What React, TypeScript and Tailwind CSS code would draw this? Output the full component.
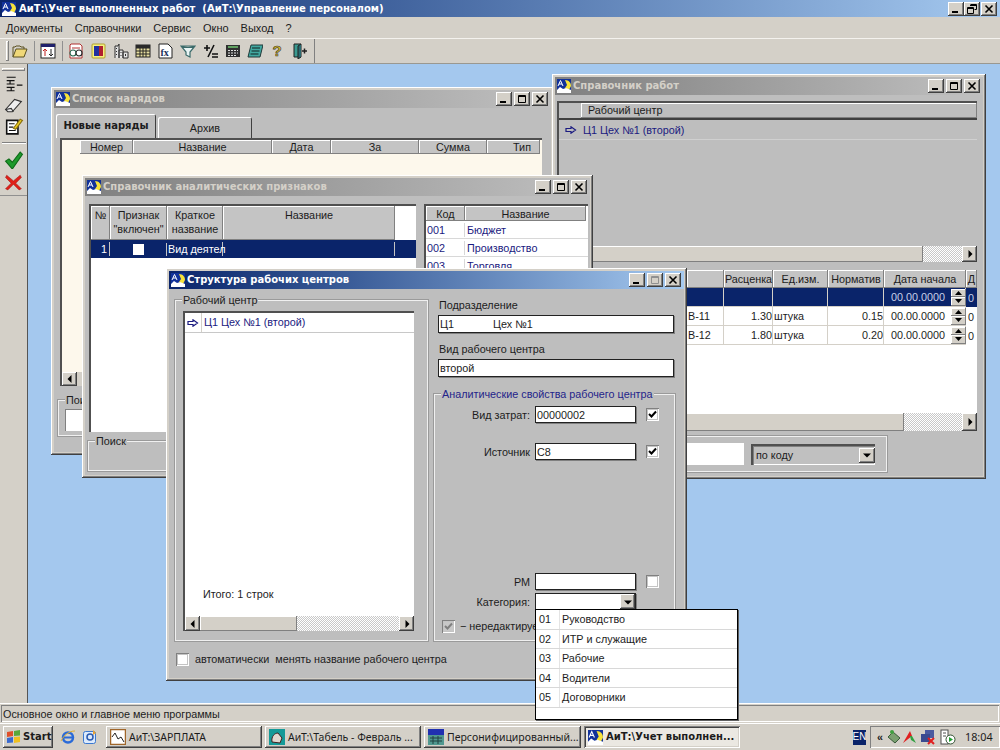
import type { ReactNode } from "react";

const raised =
  "shadow-[inset_-1px_-1px_0_#404040,inset_1px_1px_0_#fff,inset_-2px_-2px_0_#808080,inset_2px_2px_0_#d4d0c8]";
const sunken =
  "shadow-[inset_1px_1px_0_#808080,inset_-1px_-1px_0_#fff,inset_2px_2px_0_#404040,inset_-2px_-2px_0_#d4d0c8]";
const thinRaised = "shadow-[inset_-1px_-1px_0_#808080,inset_1px_1px_0_#fff]";
const thinSunken = "shadow-[inset_1px_1px_0_#808080,inset_-1px_-1px_0_#fff]";
const dither = "bg-[repeating-conic-gradient(#fff_0_25%,#c8c8c8_0_50%)] bg-[length:2px_2px]";
const titleFont = "font-['DejaVu_Sans'] font-bold text-[10px]";

function AppIcon({ size = 14 }: { size?: number }) {
  return (
    <svg width={size} height={size} viewBox="0 0 14 14" className="shrink-0">
      <rect width="14" height="14" fill="#12329a" />
      <path d="M1 7 3.500 1.500 6 7M2 5h3" stroke="#fff" strokeWidth="1" fill="none" />
      <path d="M8 1c4 0 6 3 6 6l-2 4-4-2 2-3z" fill="#f6e23a" />
      <path d="M0 14V11l3-3 3 2 3-1 5 2v3z" fill="#fff" />
    </svg>
  );
}

function WinButton({ kind, disabled }: { kind: "min" | "max" | "close" | "restore"; disabled?: boolean }) {
  const c = disabled ? "#909090" : "#000";
  return (
    <div className={`flex h-[14px] w-[16px] items-center justify-center bg-[#d4d0c8] ${raised}`}>
      <svg width="10" height="10" viewBox="0 0 10 10">
        {kind === "min" && <rect x="1" y="7" width="6" height="2" fill={c} />}
        {kind === "max" && <path d="M1.500 1.500h7v7h-7zM1 2.500h8" stroke={c} fill="none" />}
        {kind === "restore" && <path d="M3.500 .5h6v5h-2M.5 3.500h6v6h-6zM.5 4.500h6M3 1.500h6" stroke={c} fill="none" />}
        {kind === "close" && <path d="M1.500 1.500l7 7M8.500 1.500l-7 7" stroke={c} strokeWidth="1.600" />}
      </svg>
    </div>
  );
}

function Arrow({ dir, size = 15 }: { dir: "left" | "right" | "down"; size?: number }) {
  return (
    <div className={`flex h-full shrink-0 items-center justify-center bg-[#d4d0c8] ${raised}`} style={{ width: size }}>
      <svg width="8" height="8" viewBox="0 0 8 8">
        {dir === "left" && <path d="M5.500 0v8L1.500 4z" fill="#000" />}
        {dir === "right" && <path d="M2.500 0v8l4-4z" fill="#000" />}
        {dir === "down" && <path d="M0 2.500h8l-4 4z" fill="#000" />}
      </svg>
    </div>
  );
}

function Window({
  className,
  title,
  active,
  maxDisabled,
  children,
}: {
  className: string;
  title: string;
  active?: boolean;
  maxDisabled?: boolean;
  children: ReactNode;
}) {
  return (
    <div className={`absolute flex flex-col bg-[#d4d0c8] p-[3px] ${raised} ${className}`}>
      <div
        className={`flex h-[18px] shrink-0 items-center gap-[2px] pl-[2px] pr-[3px] ${
          active ? "bg-gradient-to-r from-[#0a246a] to-[#a6caf0]" : "bg-gradient-to-r from-[#808080] to-[#c0c0c0]"
        }`}
      >
        <AppIcon />
        <span className={`${titleFont} flex-1 truncate ${active ? "text-white" : "text-[#d4d0c8]"}`}>{title}</span>
        <WinButton kind="min" />
        <WinButton kind="max" disabled={maxDisabled} />
        <WinButton kind="close" />
      </div>
      <div className="relative flex min-h-0 flex-1 flex-col bg-[#bebebe]">{children}</div>
    </div>
  );
}

function Head({ className, children }: { className: string; children?: ReactNode }) {
  return (
    <div className={`flex shrink-0 items-center justify-center bg-[#c4c4c4] ${thinRaised} ${className}`}>{children}</div>
  );
}

function Group({
  className,
  label,
  blue,
  children,
}: {
  className: string;
  label: string;
  blue?: boolean;
  children?: ReactNode;
}) {
  return (
    <div className={`relative border border-[#f0f0f0] shadow-[0_0_0_1px_#9a9a9a] ${className}`}>
      {label && (
        <span className={`absolute left-[6px] top-[-8px] bg-[#bebebe] px-[1px] ${blue ? "text-[#24248a]" : ""}`}>{label}</span>
      )}
      {children}
    </div>
  );
}

function Check({ checked, disabled, className = "" }: { checked?: boolean; disabled?: boolean; className?: string }) {
  return (
    <div
      className={`flex h-[13px] w-[13px] shrink-0 items-center justify-center ${
        disabled ? "bg-[#c8c8c8]" : "bg-white"
      } ${thinSunken} outline outline-1 -outline-offset-2 outline-[#c4c4c4] ${className}`}
    >
      {checked && (
        <svg width="9" height="9" viewBox="0 0 9 9">
          <path d="M1 4l2.500 2.500L8 1.500" stroke={disabled ? "#808080" : "#000"} strokeWidth="2" fill="none" />
        </svg>
      )}
    </div>
  );
}

function Field({ className, children }: { className: string; children?: ReactNode }) {
  return (
    <div className={`flex items-center border border-[#222] bg-white pl-[1px] shadow-[1px_1px_0_#808080] ${className}`}>
      {children}
    </div>
  );
}

function RowArrow({ color }: { color: string }) {
  return (
    <svg width="12" height="8" viewBox="0 0 12 8">
      <path d="M1 2.500h5V.8L10.500 4 6 7.200V5.500H1z" fill="none" stroke={color} strokeWidth="1.200" />
    </svg>
  );
}

function Spin() {
  return (
    <div className="flex h-[17px] w-[15px] shrink-0 flex-col">
      {[0, 1].map((i) => (
        <div key={i} className={`flex h-[8.5px] items-center justify-center bg-[#d4d0c8] ${thinRaised}`}>
          <svg width="7" height="4" viewBox="0 0 7 4">
            <path d={i === 0 ? "M0 4h7L3.500 0z" : "M0 0h7L3.500 4z"} fill="#000" />
          </svg>
        </div>
      ))}
    </div>
  );
}

const toolIcons: ReactNode[] = [
  <>
    <path d="M1 14V4h2l1-1h4l1 1h3v2" fill="none" stroke="#5a5020" />
    <path d="M1 14l3-8h11l-3 8z" fill="#f0d878" stroke="#5a5020" />
  </>,
  <>
    <rect x="1" y="1" width="14" height="14" fill="#fff" stroke="#222" />
    <rect x="1" y="1" width="14" height="3" fill="#20206a" />
    <path d="M5 13V6M3 8l2-2 2 2" stroke="#c02020" fill="none" />
    <path d="M11 6v7M9 11l2 2 2-2" stroke="#222" fill="none" />
  </>,
  <>
    <path d="M3 1h9l2 2v12H2V2z" fill="#fff" stroke="#b03030" />
    <circle cx="5" cy="10" r="3" fill="#fff" stroke="#2a6a50" strokeWidth="1.200" />
    <circle cx="11" cy="10" r="3" fill="#fff" stroke="#2a2a2a" strokeWidth="1.200" />
    <path d="M4 5h8" stroke="#b03030" />
  </>,
  <>
    <rect x="1" y="1" width="13" height="14" rx="1" fill="#f6f080" stroke="#b0a030" />
    <rect x="3" y="3" width="5" height="10" fill="#2030a0" />
    <rect x="8" y="3" width="4" height="10" fill="#b02030" />
  </>,
  <>
    <path d="M2 15V3h3l1-2v14M6 15V7h4v8M10 15V9h5v6z" fill="#e4e4e4" stroke="#303030" />
    <path d="M3.500 5v1M3.500 8v1M3.500 11v1M8 9v1M8 12v1M12.500 11v2" stroke="#303030" />
  </>,
  <>
    <rect x="1" y="2" width="14" height="12" fill="#e8e0a0" stroke="#222" />
    <path d="M1 5h14M1 8h14M1 11h14M5 2v12M8 2v12M11 2v12" stroke="#222" />
    <rect x="1" y="2" width="14" height="3" fill="#2a2a2a" />
  </>,
  <>
    <path d="M1 1h9l4 4v10H1z" fill="#fff" stroke="#222" />
    <text x="2.500" y="13" fontSize="10" fontFamily="'Liberation Serif', serif" fontWeight="700" fill="#20305a">
      fx
    </text>
  </>,
  <path d="M1 3h14L10 9v5l-4-2V9z M1 3c2 2 12 2 14 0" fill="#e8f4f4" stroke="#3a6a6a" strokeWidth="1.200" />,
  <path d="M1 5h6M4 2v6M11 2L5 14M9 11h6M9 14h6" stroke="#111" strokeWidth="1.600" fill="none" />,
  <>
    <rect x="1" y="2" width="14" height="12" fill="#303030" />
    <path d="M3 4h10" stroke="#60a060" strokeWidth="2" />
    <path d="M3 7.500h2M6 7.500h2M9 7.500h2M12 7.500h1M3 10h2M6 10h2M9 10h2M12 10h1M3 12.500h2M6 12.500h2M9 12.500h2" stroke="#e0e0e0" />
  </>,
  <>
    <path d="M4 2h12l-3 12H1z" fill="#40a8a0" stroke="#203838" />
    <path d="M5 5h8M4.500 8h8M3.500 11h8" stroke="#102020" />
  </>,
  <>
    <text x="2.500" y="13" fontSize="15" fontFamily="'Liberation Sans', sans-serif" fontWeight="700" fill="#e0c020" stroke="#333" strokeWidth=".6">
      ?
    </text>
  </>,
  <>
    <path d="M2 1h7v13H2z" fill="#3a9a90" stroke="#202020" />
    <path d="M9 1l-3 2v13l3-2" fill="#2a6a70" stroke="#202020" />
    <path d="M10 8h5M12.500 5.500v5" stroke="#202020" strokeWidth="1.500" />
  </>,
];

function LeftIcon({ i }: { i: number }) {
  const icons = [
    <path key="a" d="M2 2h8M2 5h7M5 5v3M2 8h7M11 9h5M2 11h7M6 11v3M2 14h7" stroke="#111" fill="none" />,
    <g key="b">
      <path d="M1 12l8-9 6 2-8 9H3z" fill="#eee" stroke="#333" />
      <path d="M1 12l5-1 2 3" stroke="#333" fill="none" />
    </g>,
    <g key="c">
      <path d="M2 3h10v12H2z" fill="#fff" stroke="#111" strokeWidth="1.400" />
      <path d="M4 6h5M4 9h4M4 12h6" stroke="#111" />
      <path d="M8 10l6-8 2 1-6 8z" fill="#f0d020" stroke="#8a7010" />
    </g>,
    <path key="d" d="M1 9l3-2 3 3 7-9 2 2-9 13z" fill="#1e9a2c" stroke="#0e6a18" />,
    <path key="e" d="M2 2l6 5 6-5 1 2-5 5 5 5-2 1-5-5-5 5-2-1 5-5-5-5z" fill="#e02018" stroke="#a01010" strokeWidth=".5" />,
  ];
  return (
    <svg width="20" height="18" viewBox="0 0 17 16">
      {icons[i]}
    </svg>
  );
}

function TaskButton({ width, active, icon, children }: { width: string; active?: boolean; icon: ReactNode; children: ReactNode }) {
  return (
    <div
      className={`flex h-[22px] shrink-0 items-center gap-[3px] overflow-hidden whitespace-nowrap pl-[4px] ${width} ${
        active ? `bg-[#ebe8e2] font-['DejaVu_Sans'] text-[10px] font-bold ${sunken}` : `bg-[#d4d0c8] font-['Noto_Sans'] text-[10.5px] ${raised}`
      }`}
    >
      {icon}
      <span>{children}</span>
    </div>
  );
}

export default function App() {
  return (
    <div className="relative flex h-[750px] w-[1000px] flex-col overflow-hidden bg-[#d4d0c8] font-['Liberation_Sans',sans-serif] text-[10.8px] leading-[14px] text-[#1c1c1c]">
      {/* main title */}
      <div className="flex h-[17px] shrink-0 items-center bg-gradient-to-r from-[#0a246a] to-[#a6caf0] pl-[2px] pr-[3px]">
        <AppIcon />
        <span className={`${titleFont} ml-[3px] flex-1 text-white`}>АиТ:\Учет выполненных работ&nbsp; (АиТ:\Управление персоналом)</span>
        <WinButton kind="min" />
        <WinButton kind="restore" />
        <div className="w-[1px]" />
        <WinButton kind="close" />
      </div>

      {/* menu */}
      <div className="flex h-[21px] shrink-0 items-center gap-[12px] pl-[6px] text-[11px]">
        {["Документы", "Справочники", "Сервис", "Окно", "Выход", "?"].map((m) => (
          <span key={m}>{m}</span>
        ))}
      </div>

      {/* toolbar */}
      <div className="flex h-[26px] shrink-0 items-center border-t border-t-[#f4f2ee] border-b border-b-[#9a9890]">
        <div className={`ml-[6px] h-[20px] w-[3px] ${thinRaised}`} />
        <div className="flex h-full w-[306px] items-center border-r border-r-[#808080]">
          {toolIcons.map((icon, i) => (
            <div key={i} className="flex items-center">
              <div className="flex w-[22.4px] justify-center">
                <svg width="16" height="16" viewBox="0 0 16 16">
                  {icon}
                </svg>
              </div>
              {(i === 0 || i === 1) && <div className="mx-[2.3px] h-[20px] w-[1px] bg-[#909090]" />}
            </div>
          ))}
        </div>
      </div>

      {/* mdi area */}
      <div className="relative flex min-h-0 flex-1">
        <div className="w-[28px] shrink-0 border-r border-r-[#555]">
          <div className="flex h-[132px] flex-col items-center border-b border-b-[#909090]">
            <div className={`mt-[4px] h-[3px] w-[23px] ${thinRaised}`} />
            <div className="mt-[4px] flex flex-col items-center gap-[3px]">
              <LeftIcon i={0} />
              <LeftIcon i={1} />
              <LeftIcon i={2} />
            </div>
            <div className="mb-[7px] mt-[7px] h-[2px] w-[24px] border-t border-t-[#808080] border-b border-b-white" />
            <LeftIcon i={3} />
            <div className="mt-[4px]">
              <LeftIcon i={4} />
            </div>
          </div>
        </div>
        <div className="flex-1 bg-[#a4c8ee]" />

        {/* Список нарядов */}
        <Window className="left-[51px] top-[23px] h-[368px] w-[503px]" title="Список нарядов">
          <div className="flex h-[30px] shrink-0 items-end pl-[2px]">
            <div className={`flex h-[24px] w-[100px] items-center justify-center ${titleFont} rounded-t-[2px] bg-[#bebebe] shadow-[inset_1px_1px_0_#fff,inset_-1px_0_0_#404040]`}>
              Новые наряды
            </div>
            <div className="ml-[2px] flex h-[21px] w-[94px] items-center justify-center rounded-t-[2px] bg-[#bebebe] shadow-[inset_1px_1px_0_#fff,inset_-1px_0_0_#404040]">
              Архив
            </div>
          </div>
          <div className="ml-[6px] flex h-[248px] w-[482px] flex-col border-l-2 border-t-2 border-l-[#505050] border-t-[#505050] bg-[#fdf8ec]">
            <div className="flex h-[14px] shrink-0 pl-[18px]">
              <Head className="w-[53px]">Номер</Head>
              <Head className="w-[139px]">Название</Head>
              <Head className="w-[59px]">Дата</Head>
              <Head className="w-[88px]">За</Head>
              <Head className="w-[68px]">Сумма</Head>
              <Head className="w-[53px] pl-[17px]">Тип</Head>
            </div>
            <div className="flex-1" />
            <div className="flex h-[14px] bg-[#d4d0c8]">
              <Arrow dir="left" />
            </div>
          </div>
          <Group className="ml-[4px] mt-[14px] h-[36px] w-[300px]" label="Поиск">
            <div className={`ml-[6px] mt-[8px] h-[22px] w-[120px] bg-white ${thinSunken}`} />
          </Group>
        </Window>

        {/* Справочник работ */}
        <Window className="left-[552px] top-[10px] h-[405px] w-[434px]" title="Справочник работ">
          <div className="ml-[2px] mr-[6px] mt-[6px] flex h-[161px] flex-col border-l-2 border-t-2 border-l-[#505050] border-t-[#505050]">
            <div className="flex h-[17px] shrink-0 border-b-2 border-b-[#404040] pl-[22px]">
              <div className={`flex-1 pl-[7px] leading-[15px] ${thinRaised}`}>Рабочий центр</div>
            </div>
            <div className="flex h-[20px] shrink-0 items-center border-b border-b-[#d0d0d0] pl-[6px] text-[#1a1a80]">
              <RowArrow color="#1a1a80" />
              <span className="ml-[6px]">Ц1 Цех №1 (второй)</span>
            </div>
            <div className="flex-1" />
            <div className="flex h-[16px] shrink-0">
              <div className={`flex-1 bg-[#d4d0c8] ${thinRaised}`} />
              <div className={`w-[39px] ${dither}`} />
              <Arrow dir="right" />
            </div>
          </div>
          <div className="ml-[2px] mr-[6px] mt-[8px] flex h-[161px] flex-col bg-white">
            <div className="flex h-[18px] shrink-0 pl-[130px]">
              <Head className="w-[37px]" />
              <Head className="w-[49px]">Расценка</Head>
              <Head className="w-[55px]">Ед.изм.</Head>
              <Head className="w-[56px]">Норматив</Head>
              <Head className="w-[82px]">Дата начала</Head>
              <Head className="flex-1">Д</Head>
            </div>
            {[
              ["", "", "", "", true],
              ["В-11", "1.30", "штука", "0.15", false],
              ["В-12", "1.80", "штука", "0.20", false],
            ].map(([code, price, unit, norm, sel], i) => (
              <div
                key={i}
                className={`flex h-[19px] shrink-0 items-center pl-[130px] ${
                  sel ? "bg-[#0a246a] text-[#c8d0e8]" : ""
                }`}
              >
                <div className="h-full w-[37px] border-r border-b border-[#d4d0c8] pl-[1px] leading-[18px]">{code as string}</div>
                <div className="h-full w-[49px] border-r border-b border-[#d4d0c8] text-right leading-[18px]">{price as string}</div>
                <div className="h-full w-[55px] border-r border-b border-[#d4d0c8] pl-[1px] leading-[18px]">{unit as string}</div>
                <div className="h-full w-[56px] border-r border-b border-[#d4d0c8] text-right leading-[18px]">{norm as string}</div>
                <div className="flex h-full w-[82px] items-center gap-[7px] border-r border-b border-[#d4d0c8] pl-[7px]">
                  <span className="w-[53px] whitespace-nowrap">00.00.0000</span>
                  <Spin />
                </div>
                <div className="flex-1 overflow-hidden pl-[2px]">0</div>
              </div>
            ))}
            <div className="flex-1" />
            <div className="flex h-[18px] shrink-0">
              <div className={`flex-1 bg-[#d4d0c8] ${thinRaised}`} />
              <div className={`w-[58px] ${dither}`} />
              <Arrow dir="right" />
            </div>
          </div>
          <div className="flex flex-1 items-start pl-[128px] pt-[5px]">
            <Group className="flex h-[36px] w-[204px] items-center" label="">
              <div className="h-[22px] w-[60px] bg-white" />
              <div className={`ml-[7px] flex h-[21px] w-[124px] items-center border-l-2 border-t-2 border-l-[#505050] border-t-[#505050] bg-[#c0c0c0] pl-[3px] ${thinSunken}`}>
                <span className="flex-1">по коду</span>
                <div className="h-[15px]">
                  <Arrow dir="down" size={16} />
                </div>
              </div>
            </Group>
          </div>
        </Window>

        {/* Справочник аналитических признаков */}
        <Window className="left-[82px] top-[111px] h-[303px] w-[511px]" title="Справочник аналитических признаков">
          <div className="flex h-[236px] shrink-0 pl-[4px] pt-[8px]">
            <div className="flex h-[228px] w-[327px] flex-col border-l-2 border-t-2 border-l-[#505050] border-t-[#505050] bg-white">
              <div className="flex h-[34px] shrink-0">
                <div className={`flex w-[19px] justify-center bg-[#c4c4c4] pt-[2px] ${thinRaised}`}>№</div>
                <div className={`flex w-[57px] flex-col items-center bg-[#c4c4c4] pt-[2px] ${thinRaised}`}>
                  <span>Признак</span>
                  <span>"включен"</span>
                </div>
                <div className={`flex w-[56px] flex-col items-center bg-[#c4c4c4] pt-[2px] ${thinRaised}`}>
                  <span>Краткое</span>
                  <span>название</span>
                </div>
                <div className={`flex w-[172px] justify-center bg-[#c4c4c4] pt-[2px] ${thinRaised}`}>Название</div>
              </div>
              <div className="flex h-[18px] shrink-0 items-center bg-[#0a246a] text-white">
                <div className="w-[19px] border-r border-[#c4c4c4] pr-[2px] text-right">1</div>
                <div className="flex w-[57px] justify-center border-r border-[#c4c4c4]">
                  <div className="my-[1px] h-[11px] w-[11px] bg-white" />
                </div>
                <div className="w-[56px] whitespace-nowrap border-r border-[#c4c4c4] pl-[1px]">Вид деятел</div>
                <div className="w-[172px] border-r border-[#c4c4c4]">&nbsp;</div>
              </div>
            </div>
            <div className="ml-[8px] flex h-[120px] w-[164px] flex-col border-l-2 border-t-2 border-l-[#505050] border-t-[#505050] bg-white">
              <div className="flex h-[15px] shrink-0">
                <Head className="w-[39px]">Код</Head>
                <Head className="w-[121px]">Название</Head>
              </div>
              {[
                ["001", "Бюджет"],
                ["002", "Производство"],
                ["003", "Торговля"],
              ].map(([code, name]) => (
                <div key={code} className="flex h-[18px] shrink-0 items-center border-b border-b-[#d8d8d8]">
                  <span className="w-[39px] border-r border-r-[#d8d8d8] pl-[1px] text-[#1a1a80]">{code}</span>
                  <span className="pl-[2px] text-[#1a1a80]">{name}</span>
                </div>
              ))}
            </div>
          </div>
          <Group className="ml-[3px] mt-[9px] h-[30px] w-[300px]" label="Поиск" />
        </Window>

        {/* Структура рабочих центров */}
        <Window className="left-[166px] top-[204px] h-[413px] w-[521px]" title="Структура рабочих центров" active maxDisabled>
          <div className="flex flex-1 pl-[6px] pr-[8px] pt-[11px]">
            <div className="w-[253px] shrink-0">
              <Group className="h-[341px] w-[253px] pl-[7px] pr-[13px] pt-[10px]" label="Рабочий центр">
                <div className="relative flex h-[320px] flex-col border-l-2 border-t-2 border-l-[#505050] border-t-[#505050] bg-white">
                  <div className="flex h-[20px] shrink-0 border-b border-b-[#c8c8c8] text-[#1a1a80]">
                    <div className="flex w-[17px] items-center justify-center border-r border-r-[#d4d0c8]">
                      <RowArrow color="#1a1a80" />
                    </div>
                    <span className="pl-[2px] leading-[19px]">Ц1 Цех №1 (второй)</span>
                  </div>
                  <div className="flex flex-1 items-end pb-[15px] pl-[18px]">Итого: 1 строк</div>
                  <div className="flex h-[15px] shrink-0">
                    <Arrow dir="left" />
                    <div className={`w-[97px] bg-[#d4d0c8] ${thinRaised}`} />
                    <div className={`flex-1 ${dither}`} />
                    <Arrow dir="right" />
                  </div>
                </div>
              </Group>
              <div className="mt-[11px] flex items-center gap-[6px] whitespace-nowrap pl-[1px]">
                <Check />
                <span>автоматически&nbsp; менять название рабочего центра</span>
              </div>
            </div>

            <div className="ml-[6px] -mt-[3px] flex-1">
              <div className="pl-[5px] pt-[1px]">Подразделение</div>
              <Field className="ml-[4px] mt-[3px] h-[18px] w-[236px]">
                <span className="w-[53px]">Ц1</span>
                <span>Цех №1</span>
              </Field>
              <div className="pl-[5px] pt-[9px]">Вид рабочего центра</div>
              <Field className="ml-[4px] mt-[3px] h-[18px] w-[236px]">второй</Field>
              <Group className="mt-[17px] h-[247px] w-[241px]" label="Аналитические свойства рабочего центра" blue>
                <div className="flex items-center pt-[11px]">
                  <span className="w-[95px] text-right">Вид затрат:</span>
                  <Field className="ml-[5px] h-[17px] w-[101px]">00000002</Field>
                  <Check checked className="ml-[10px]" />
                </div>
                <div className="flex items-center pt-[20px]">
                  <span className="w-[95px] text-right">Источник</span>
                  <Field className="ml-[5px] h-[17px] w-[101px]">C8</Field>
                  <Check checked className="ml-[10px]" />
                </div>
                <div className="flex items-center pt-[113px]">
                  <span className="w-[95px] text-right">РМ</span>
                  <Field className="ml-[5px] h-[17px] w-[101px]" />
                  <Check className="ml-[10px]" />
                </div>
                <div className="flex items-center pt-[3px]">
                  <span className="w-[95px] text-right">Категория:</span>
                  <Field className="ml-[5px] h-[17px] w-[101px] justify-end">
                    <div className="h-[15px]">
                      <Arrow dir="down" />
                    </div>
                  </Field>
                </div>
                <div className="flex items-center gap-[5px] pl-[7px] pt-[9px]">
                  <Check checked disabled />
                  <span className="whitespace-nowrap">− нередактируе</span>
                </div>
              </Group>
            </div>
          </div>

          {/* dropdown list of Категория */}
          <div className="absolute left-[366px] top-[320px] flex h-[111px] w-[203px] flex-col border border-black bg-white shadow-[1px_1px_0_#606060]">
            {[
              ["01", "Руководство"],
              ["02", "ИТР и служащие"],
              ["03", "Рабочие"],
              ["04", "Водители"],
              ["05", "Договорники"],
            ].map(([code, name]) => (
              <div key={code} className="flex h-[19.5px] shrink-0 items-center border-b border-b-[#d8d8d8]">
                <span className="h-full w-[24px] border-r border-r-[#e4e4e4] pl-[3px] leading-[19px]">{code}</span>
                <span className="pl-[2px]">{name}</span>
              </div>
            ))}
          </div>
        </Window>
      </div>

      {/* status bar */}
      <div className="flex h-[20px] shrink-0 items-center border-t border-t-white px-[1px]">
        <div className={`flex h-[17px] flex-1 items-center pl-[2px] ${thinSunken}`}>Основное окно и главное меню программы</div>
      </div>

      {/* taskbar */}
      <div className="flex h-[27px] shrink-0 items-center gap-[3px] border-t border-t-white pl-[3px]">
        <div className={`flex h-[22px] w-[50px] items-center gap-[2px] pl-[3px] ${raised}`}>
          <svg width="15" height="14" viewBox="0 0 15 14">
            <path d="M1 2l6-1v5L1 7z" fill="#e0502a" />
            <path d="M8 1l6-1v5.500L8 6z" fill="#5aa83a" />
            <path d="M1 8l6-1v5.500L1 13z" fill="#3a6ad0" />
            <path d="M8 7l6-.5V12l-6 1z" fill="#f0c020" />
          </svg>
          <span className="font-['DejaVu_Sans'] text-[10px] font-bold">Start</span>
        </div>
        <div className="ml-[4px] flex w-[43px] items-center gap-[6px]">
          <svg width="16" height="16" viewBox="0 0 16 16">
            <circle cx="8" cy="8.500" r="5" fill="none" stroke="#2a6ad8" strokeWidth="2.500" />
            <path d="M3 8.500h10" stroke="#2a6ad8" strokeWidth="2" />
            <path d="M1 12c3-6 8-10 14-10" stroke="#e0b030" fill="none" />
          </svg>
          <svg width="16" height="16" viewBox="0 0 16 16">
            <rect x="1.500" y="2.500" width="12" height="12" rx="2" fill="#dceafc" stroke="#3a78d0" />
            <circle cx="8" cy="8" r="3" fill="none" stroke="#2a5ab0" strokeWidth="1.500" />
            <path d="M11 1l3 3-3 2" fill="#e8a030" />
          </svg>
        </div>
        <TaskButton
          width="w-[156px]"
          icon={
            <svg width="16" height="16" viewBox="0 0 16 16">
              <rect x=".5" y=".5" width="15" height="15" fill="#fff" stroke="#a0662a" strokeWidth="1.500" />
              <path d="M2 8l3-4 3 6 3-2 3 5" stroke="#222" fill="none" />
            </svg>
          }
        >
          АиТ:\ЗАРПЛАТА
        </TaskButton>
        <TaskButton
          width="w-[156px]"
          icon={
            <svg width="16" height="16" viewBox="0 0 16 16">
              <rect width="16" height="16" fill="#149a98" />
              <path d="M3 13c-1-6 3-9 6-9l4 5-2 5z" fill="#e0d8d0" stroke="#402020" />
            </svg>
          }
        >
          АиТ:\Табель - Февраль ...
        </TaskButton>
        <TaskButton
          width="w-[157px]"
          icon={
            <svg width="16" height="16" viewBox="0 0 16 16">
              <rect y="0" width="16" height="6" fill="#2030b0" />
              <rect y="6" width="16" height="10" fill="#509890" />
              <path d="M2 9h12M2 12h12M5 7v8M10 7v8" stroke="#204040" />
            </svg>
          }
        >
          Персонифицированный...
        </TaskButton>
        <TaskButton width="w-[156px]" active icon={<AppIcon size={15} />}>
          АиТ:\Учет выполнен...
        </TaskButton>
        <div className="flex-1" />
        <div className="flex h-[15px] w-[13px] items-center justify-center bg-[#0a246a] text-[10px] text-white">EN</div>
        <div className={`ml-[1px] flex h-[22px] w-[130px] items-center gap-[1px] pl-[7px] ${thinSunken}`}>
          <span className="font-bold">«</span>
          <svg width="14" height="16" viewBox="0 0 14 16" className="ml-[3px]">
            <path d="M1 8l5-5 7 6-5 5z" fill="#7aa070" stroke="#3a5a3a" />
            <circle cx="5" cy="3" r="2" fill="#40a040" />
          </svg>
          <svg width="15" height="14" viewBox="0 0 15 14">
            <path d="M1 13L8 1l2 5z" fill="#e02020" />
            <path d="M8 6l2 0 4 7-5-3z" fill="#30a040" />
          </svg>
          <svg width="16" height="16" viewBox="0 0 16 16" className="ml-[2px]">
            <rect x="5" y="1" width="9" height="8" fill="#4a5aa0" />
            <rect x="1" y="5" width="9" height="8" fill="#3a4a90" />
            <path d="M8 9l6 6M14 9l-6 6" stroke="#e02020" strokeWidth="2" />
          </svg>
          <svg width="17" height="16" viewBox="0 0 17 16" className="ml-[2px]">
            <rect x="2" y="1" width="7" height="14" fill="#fff" stroke="#505050" />
            <path d="M4 4h3M4 7h3" stroke="#505050" />
            <circle cx="11.500" cy="10.500" r="4.500" fill="#fff" stroke="#305030" />
            <path d="M10 8l4 2.500-4 2.500z" fill="#20a030" />
          </svg>
          <span className="ml-[8px] font-['Noto_Sans']">18:04</span>
        </div>
      </div>
    </div>
  );
}
